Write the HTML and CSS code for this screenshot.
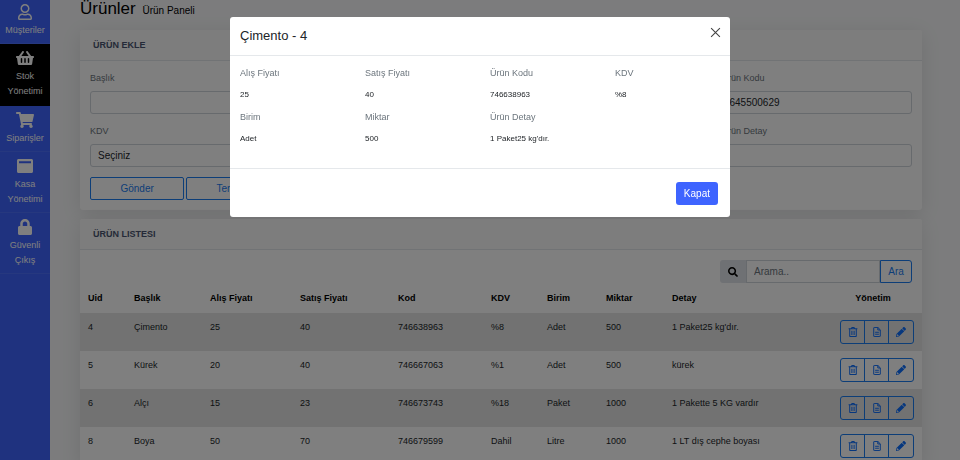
FILE: index.html
```html
<!DOCTYPE html>
<html lang="tr">
<head>
<meta charset="utf-8">
<title>Ürünler</title>
<link rel="stylesheet" href="styles.css">
</head>
<body>
<svg class="defs" aria-hidden="true">
  <symbol id="i-trash" viewBox="0 0 448 512"><path fill="none" stroke="currentColor" stroke-width="52" stroke-linejoin="round" d="M56 112v344q0 32 32 32h272q32 0 32-32V112M0 88h448M140 80l30-52h108l30 52M168 190v216M280 190v216"/></symbol>
  <symbol id="i-file" viewBox="0 0 384 512"><path fill="none" stroke="currentColor" stroke-width="50" stroke-linejoin="round" d="M24 48q0-24 24-24h190l122 122v318q0 24-24 24H48q-24 0-24-24zM232 30v122h122M96 270h192M96 370h192"/></symbol>
  <symbol id="i-pencil" viewBox="0 0 512 512"><path fill="currentColor" d="M497.9 142.1l-46.1 46.1c-4.7 4.7-12.3 4.7-17 0l-111-111c-4.7-4.7-4.7-12.3 0-17l46.1-46.1c18.7-18.7 49.1-18.7 67.9 0l60.1 60.1c18.8 18.7 18.8 49.1 0 67.9zM284.2 99.8L21.6 362.4.4 483.9c-2.9 16.4 11.4 30.6 27.8 27.8l121.5-21.3 262.6-262.6c4.7-4.7 4.7-12.3 0-17l-111-111c-4.8-4.7-12.4-4.7-17.1 0zM88 424h48v36.3l-64.5 11.3-31.1-31.1L51.7 376H88v48z"/></symbol>
</svg>
<div class="layout">
  <nav class="sidebar">
    <a href="#"><svg viewBox="0 0 448 512"><path d="M313.6 304c-28.7 0-42.5 16-89.6 16-47.1 0-60.8-16-89.6-16C60.2 304 0 364.2 0 438.4V464c0 26.5 21.5 48 48 48h352c26.5 0 48-21.5 48-48v-25.6c0-74.2-60.2-134.4-134.4-134.4zM400 464H48v-25.6c0-47.6 38.8-86.4 86.4-86.4 14.6 0 38.3 16 89.6 16 51.7 0 74.9-16 89.6-16 47.6 0 86.4 38.8 86.4 86.4V464zM224 288c79.5 0 144-64.5 144-144S303.5 0 224 0 80 64.5 80 144s64.5 144 144 144zm0-240c52.9 0 96 43.1 96 96s-43.1 96-96 96-96-43.1-96-96 43.1-96 96-96z"/></svg>Müşteriler</a>
    <a href="#" class="active"><svg viewBox="0 0 576 512"><path d="M576 216v16c0 13.255-10.745 24-24 24h-8l-26.113 182.788C514.509 462.435 494.257 480 470.37 480H105.63c-23.887 0-44.139-17.565-47.518-41.212L32 256h-8c-13.255 0-24-10.745-24-24v-16c0-13.255 10.745-24 24-24h67.341l106.78-146.821c10.395-14.292 30.407-17.453 44.701-7.058 14.293 10.395 17.453 30.408 7.058 44.701L170.477 192h235.046L326.12 82.821c-10.395-14.292-7.234-34.306 7.059-44.701 14.291-10.395 34.306-7.235 44.701 7.058L484.659 192H552c13.255 0 24 10.745 24 24zM312 392V280c0-13.255-10.745-24-24-24s-24 10.745-24 24v112c0 13.255 10.745 24 24 24s24-10.745 24-24zm112 0V280c0-13.255-10.745-24-24-24s-24 10.745-24 24v112c0 13.255 10.745 24 24 24s24-10.745 24-24zm-224 0V280c0-13.255-10.745-24-24-24s-24 10.745-24 24v112c0 13.255 10.745 24 24 24s24-10.745 24-24z"/></svg>Stok Yönetimi</a>
    <a href="#"><svg viewBox="0 0 576 512"><path d="M528.12 301.319l47.273-208C578.806 78.301 567.391 64 551.99 64H159.208l-9.166-44.81C147.758 8.021 137.93 0 126.529 0H24C10.745 0 0 10.745 0 24v16c0 13.255 10.745 24 24 24h69.883l70.248 343.435C147.325 417.1 136 435.222 136 456c0 30.928 25.072 56 56 56s56-25.072 56-56c0-15.674-6.447-29.835-16.824-40h209.647C430.447 426.165 424 440.326 424 456c0 30.928 25.072 56 56 56s56-25.072 56-56c0-22.172-12.888-41.332-31.579-50.405l5.517-24.276c3.413-15.018-8.002-29.319-23.403-29.319H218.117l-6.545-32h293.145c11.206 0 20.92-7.754 23.403-18.681z"/></svg>Siparişler</a>
    <a href="#"><svg viewBox="0 0 512 512"><path fill-rule="evenodd" d="M48 32h416c26 0 48 22 48 48v352c0 26-22 48-48 48H48c-26 0-48-22-48-48V80c0-26 22-48 48-48zM64 100v64h384v-64z"/></svg>Kasa Yönetimi</a>
    <a href="#"><svg viewBox="0 0 448 512"><path d="M400 224h-24v-72C376 68.2 307.8 0 224 0S72 68.2 72 152v72H48c-26.5 0-48 21.5-48 48v192c0 26.5 21.5 48 48 48h352c26.5 0 48-21.5 48-48V272c0-26.5-21.5-48-48-48zm-104 0H152v-72c0-39.7 32.3-72 72-72s72 32.3 72 72v72z"/></svg>Güvenli Çıkış</a>
  </nav>
  <main class="content">
    <h1>Ürünler <small>Ürün Paneli</small></h1>
    <section class="card form-card">
      <h2>ÜRÜN EKLE</h2>
      <form class="fields">
        <div class="field"><label for="baslik">Başlık</label><input id="baslik" type="text"></div>
        <div class="field"><label for="alis">Alış Fiyatı</label><input id="alis" type="text"></div>
        <div class="field"><label for="satis">Satış Fiyatı</label><input id="satis" type="text"></div>
        <div class="field"><label for="kod">Ürün Kodu</label><input id="kod" type="text" value="645500629"></div>
        <div class="field"><label for="kdv">KDV</label><select id="kdv"><option>Seçiniz</option></select></div>
        <div class="field"><label for="birim">Birim</label><select id="birim"><option>Seçiniz</option></select></div>
        <div class="field"><label for="miktar">Miktar</label><input id="miktar" type="text"></div>
        <div class="field"><label for="detay">Ürün Detay</label><input id="detay" type="text"></div>
        <div class="actions"><button type="button" class="outline">Gönder</button><button type="reset" class="outline">Temizle</button></div>
      </form>
    </section>
    <section class="card">
      <h2>ÜRÜN LISTESI</h2>
      <form class="search">
        <label for="q" aria-label="Arama"><svg viewBox="0 0 512 512"><path d="M505 442.7L405.3 343c-4.5-4.5-10.6-7-17-7H372c27.6-35.3 44-79.7 44-128C416 93.1 322.9 0 208 0S0 93.1 0 208s93.1 208 208 208c48.3 0 92.7-16.4 128-44v16.3c0 6.4 2.5 12.5 7 17l99.7 99.7c9.4 9.4 24.6 9.4 33.9 0l28.3-28.3c9.4-9.4 9.4-24.6.1-34zM208 336c-70.7 0-128-57.2-128-128 0-70.7 57.2-128 128-128 70.7 0 128 57.2 128 128 0 70.7-57.2 128-128 128z"/></svg></label>
        <input id="q" type="text" placeholder="Arama..">
        <button type="button" class="outline">Ara</button>
      </form>
      <table>
        <colgroup><col class="c-uid"><col class="c-name"><col class="c-price"><col class="c-sale"><col class="c-code"><col class="c-tax"><col class="c-unit"><col class="c-qty"><col><col class="c-tools"></colgroup>
        <thead><tr><th>Uid</th><th>Başlık</th><th>Alış Fiyatı</th><th>Satış Fiyatı</th><th>Kod</th><th>KDV</th><th>Birim</th><th>Miktar</th><th>Detay</th><th class="tools-head">Yönetim</th></tr></thead>
        <tbody>
          <tr><td>4</td><td>Çimento</td><td>25</td><td>40</td><td>746638963</td><td>%8</td><td>Adet</td><td>500</td><td>1 Paket25 kg'dır.</td><td class="tools"><div class="group"><button aria-label="Sil"><svg><use href="#i-trash"/></svg></button><button aria-label="Detay"><svg><use href="#i-file"/></svg></button><button aria-label="Düzenle"><svg><use href="#i-pencil"/></svg></button></div></td></tr>
          <tr><td>5</td><td>Kürek</td><td>20</td><td>40</td><td>746667063</td><td>%1</td><td>Adet</td><td>500</td><td>kürek</td><td class="tools"><div class="group"><button aria-label="Sil"><svg><use href="#i-trash"/></svg></button><button aria-label="Detay"><svg><use href="#i-file"/></svg></button><button aria-label="Düzenle"><svg><use href="#i-pencil"/></svg></button></div></td></tr>
          <tr><td>6</td><td>Alçı</td><td>15</td><td>23</td><td>746673743</td><td>%18</td><td>Paket</td><td>1000</td><td>1 Pakette 5 KG vardır</td><td class="tools"><div class="group"><button aria-label="Sil"><svg><use href="#i-trash"/></svg></button><button aria-label="Detay"><svg><use href="#i-file"/></svg></button><button aria-label="Düzenle"><svg><use href="#i-pencil"/></svg></button></div></td></tr>
          <tr><td>8</td><td>Boya</td><td>50</td><td>70</td><td>746679599</td><td>Dahil</td><td>Litre</td><td>1000</td><td>1 LT dış cephe boyası</td><td class="tools"><div class="group"><button aria-label="Sil"><svg><use href="#i-trash"/></svg></button><button aria-label="Detay"><svg><use href="#i-file"/></svg></button><button aria-label="Düzenle"><svg><use href="#i-pencil"/></svg></button></div></td></tr>
        </tbody>
      </table>
    </section>
  </main>
</div>
<div class="backdrop">
  <div class="modal" role="dialog" aria-modal="true" aria-labelledby="modal-title">
    <header><h3 id="modal-title">Çimento - 4</h3><button class="close" aria-label="Kapat"><svg viewBox="0 0 10 10"><path d="M1 1l8 8M9 1l-8 8"/></svg></button></header>
    <dl>
      <div><dt>Alış Fiyatı</dt><dd>25</dd></div>
      <div><dt>Satış Fiyatı</dt><dd>40</dd></div>
      <div><dt>Ürün Kodu</dt><dd>746638963</dd></div>
      <div><dt>KDV</dt><dd>%8</dd></div>
      <div><dt>Birim</dt><dd>Adet</dd></div>
      <div><dt>Miktar</dt><dd>500</dd></div>
      <div><dt>Ürün Detay</dt><dd>1 Paket25 kg'dır.</dd></div>
    </dl>
    <footer><button class="primary">Kapat</button></footer>
  </div>
</div>
</body>
</html>
```
FILE: styles.css
```css
* { box-sizing: border-box; }
body {
  margin: 0;
  height: 100vh;
  overflow: hidden;
  background: #f8f9fa;
  color: #212529;
  font: 10px/15px "Liberation Sans", Arial, sans-serif;
}
button, input, select { font: inherit; color: inherit; margin: 0; }
h1, h2, h3, dl, dd { margin: 0; font-weight: 400; }
.defs { display: none; }
.layout { display: flex; min-height: 100vh; }

.sidebar { width: 50px; flex: none; background: #3e64ff; }
.sidebar a {
  display: block;
  padding: 6px 4px 5px;
  border-bottom: 1px solid #4c70ff;
  color: #fff;
  font-size: 9px;
  text-align: center;
  text-decoration: none;
}
.sidebar a:first-child { padding-top: 4px; }
.sidebar .active { padding-bottom: 6px; background: #000; border-color: #000; }
.sidebar svg { display: block; height: 16px; margin: 0 auto 3px; fill: currentColor; }

.content { flex: 1; min-width: 0; padding: 0 38px 0 30px; }
h1 { color: #000; font-size: 17px; line-height: 18px; margin-bottom: 10px; }
h1 small { margin-left: 2px; font-size: 10px; }
.card {
  margin-bottom: 9px;
  background: #fff;
  border-radius: 3px;
  box-shadow: 0 4px 20px rgba(0, 0, 0, .1);
}
.card h2 {
  padding: 8px 13px 7px;
  border-bottom: 1px solid #e3e6ea;
  background: #fafafa;
  border-radius: 3px 3px 0 0;
  color: #4b5570;
  font-size: 9px;
  font-weight: 700;
}
.fields {
  display: grid;
  grid-template-columns: repeat(4, 1fr);
  gap: 10px 20px;
  padding: 10px;
}
.field label { display: block; margin-bottom: 5px; color: #6c757d; font-size: 9px; }
.field input, .field select, .search input {
  display: block;
  width: 100%;
  height: 23px;
  padding: 0 7px;
  border: 1px solid #ced4da;
  border-radius: 3px;
  background: #fff;
}
.field select { appearance: none; }
.actions { display: flex; gap: 2px; }
.outline {
  height: 23px;
  border: 1px solid #1a7cf0;
  border-radius: 2px;
  background: none;
  color: #1a7cf0;
}
.actions .outline { flex: 1; }

.search { display: flex; width: 192px; margin: 10px 10px 1px auto; }
.search label {
  display: flex;
  width: 26px;
  flex: none;
  align-items: center;
  justify-content: center;
  border-radius: 3px 0 0 3px;
  background: #dfe3e8;
}
.search label svg { width: 10px; height: 10px; }
.search input { flex: 1; min-width: 0; border-radius: 0; }
.search input::placeholder { color: #6c757d; opacity: 1; }
.search .outline { width: 32px; flex: none; padding: 0; border-radius: 0 3px 3px 0; }

table { width: 100%; table-layout: fixed; border-collapse: collapse; font-size: 9px; }
th, td { padding: 7px 8px; text-align: left; vertical-align: top; white-space: nowrap; }
th { color: #000; }
td { height: 38px; }
tbody tr:nth-child(odd) { background: #e4e4e4; }
.c-uid { width: 46px; }
.c-name { width: 76px; }
.c-price { width: 90px; }
.c-sale { width: 98px; }
.c-code { width: 93px; }
.c-tax { width: 56px; }
.c-unit { width: 59px; }
.c-qty { width: 66px; }
.c-tools { width: 98px; }
.tools-head { text-align: center; }
.tools { padding-bottom: 6px; }
.group { display: flex; justify-content: flex-end; }
.group button {
  display: flex;
  width: 25px;
  height: 24px;
  padding: 0;
  align-items: center;
  justify-content: center;
  border: 1px solid #1a7cf0;
  background: none;
  color: #0d6efd;
}
.group button + button { margin-left: -1px; }
.group button:first-child { border-radius: 3px 0 0 3px; }
.group button:last-child { width: 26px; border-radius: 0 3px 3px 0; }
.group svg { width: 10px; height: 10px; }

.backdrop { position: fixed; inset: 0; background: rgba(0, 0, 0, .5); }
.modal {
  width: 500px;
  max-width: 100%;
  margin: 17px auto;
  border-radius: 3px;
  background: #fff;
}
.modal header {
  display: flex;
  justify-content: space-between;
  padding: 10px 9px 10px 10px;
  border-bottom: 1px solid #e5e8eb;
}
.modal h3 { font-size: 13px; line-height: 18px; }
.close { display: flex; height: 11px; padding: 0; border: 0; background: none; }
.close svg { width: 11px; height: 11px; stroke: #444; fill: none; }
.modal dl {
  display: grid;
  grid-template-columns: repeat(4, 1fr);
  padding: 10px 0 14px;
}
.modal dl div { padding: 0 10px; }
.modal dt { color: #6c757d; font-size: 9px; margin-bottom: 6px; }
.modal dd { font-size: 8px; margin-bottom: 8px; }
.modal footer { display: flex; justify-content: flex-end; padding: 13px 12px 12px; border-top: 1px solid #e5e8eb; }
.primary {
  height: 23px;
  padding: 0 8px;
  border: 0;
  border-radius: 3px;
  background: #3e64ff;
  color: #fff;
}
```
